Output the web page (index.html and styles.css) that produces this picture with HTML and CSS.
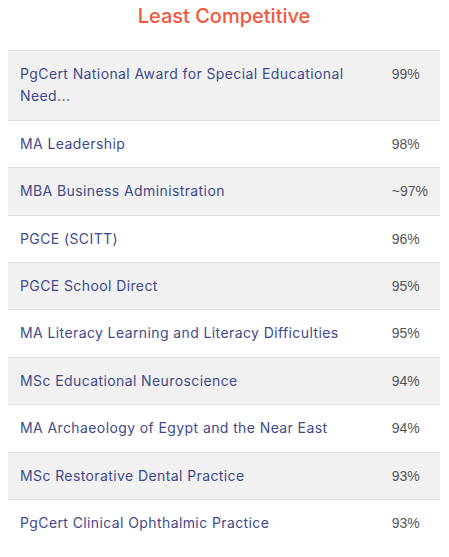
FILE: index.html
```html
<!DOCTYPE html>
<html lang="en">
<head>
<meta charset="utf-8">
<title>Least Competitive</title>
<link rel="stylesheet" href="styles.css">
</head>
<body>
<div class="wrap">
  <h3 class="title">Least Competitive</h3>
  <table class="rank">
    <tbody>
      <tr><td class="name">PgCert National Award for Special Educational Need...</td><td class="pct">99%</td></tr>
      <tr><td class="name">MA Leadership</td><td class="pct">98%</td></tr>
      <tr><td class="name">MBA Business Administration</td><td class="pct">~97%</td></tr>
      <tr><td class="name">PGCE (SCITT)</td><td class="pct">96%</td></tr>
      <tr><td class="name">PGCE School Direct</td><td class="pct">95%</td></tr>
      <tr><td class="name">MA Literacy Learning and Literacy Difficulties</td><td class="pct">95%</td></tr>
      <tr><td class="name">MSc Educational Neuroscience</td><td class="pct">94%</td></tr>
      <tr><td class="name">MA Archaeology of Egypt and the Near East</td><td class="pct">94%</td></tr>
      <tr><td class="name">MSc Restorative Dental Practice</td><td class="pct">93%</td></tr>
      <tr><td class="name">PgCert Clinical Ophthalmic Practice</td><td class="pct">93%</td></tr>
    </tbody>
  </table>
</div>
</body>
</html>
```
FILE: styles.css
```css
html, body {
  margin: 0;
  padding: 0;
  background: #ffffff;
}
.wrap {
  padding: 0 9px 0 8px;
}
.title {
  margin: 0 0 19px;
  padding-top: 1px;
  font-family: Inter, "Open Sans", sans-serif;
  font-weight: 500;
  font-size: 20px;
  line-height: 30px;
  color: #f4573a;
  text-align: center;
}
.rank {
  width: 100%;
  border-collapse: collapse;
}
.rank tr {
  border-top: 1px solid #dddde3;
}
.rank tr:nth-child(odd) {
  background: #f1f1f1;
}
.rank td {
  padding: 12px;
  vertical-align: top;
  font-size: 14px;
  line-height: 22.4px;
}
.name {
  font-family: Inter, "Open Sans", sans-serif;
  color: #3f4a8c;
  letter-spacing: 0.4px;
}
.pct {
  font-family: "Liberation Sans", Arial, sans-serif;
  color: #555555;
  white-space: nowrap;
  width: 1%;
}
```
